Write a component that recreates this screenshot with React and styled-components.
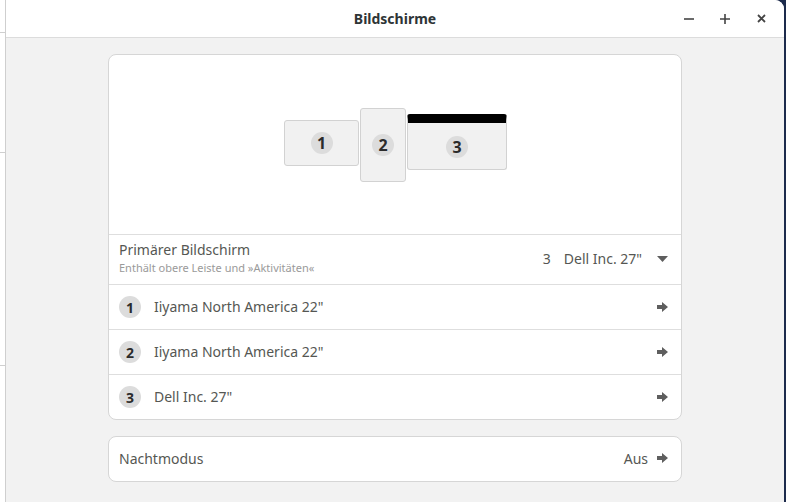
import styled, { createGlobalStyle } from "styled-components";

const Global = createGlobalStyle`
  html, body {
    margin: 0;
    padding: 0;
    height: 100%;
    overflow: hidden;
  }
  body {
    font-family: "Noto Sans", "Open Sans", sans-serif;
    background: #1d2b4c;
  }
  #root {
    height: 100%;
  }
`;

const Screen = styled.div`
  display: flex;
  height: 502px;
  width: 786px;
`;

const LeftStrip = styled.div`
  width: 5px;
  background: #fff;
  border-right: 1px solid #cfcfcf;
  display: flex;
  flex-direction: column;
  .mark {
    height: 1px;
    background: #cfcfcf;
  }
`;

const Window = styled.div`
  width: 778px;
  display: flex;
  flex-direction: column;
  background: #f2f2f2;
  border-top-right-radius: 9px;
  overflow: hidden;
`;

const HeaderBar = styled.div`
  height: 37px;
  flex-shrink: 0;
  background: #fff;
  border-bottom: 1px solid #dcdcdc;
  display: flex;
  align-items: center;
  justify-content: center;
  position: relative;
`;

const Title = styled.div`
  font-size: 14px;
  font-weight: 700;
  color: #2e3436;
`;

const Controls = styled.div`
  position: absolute;
  right: 15px;
  top: 0;
  height: 37px;
  display: flex;
  align-items: center;
  gap: 20px;
`;

const CtrlBtn = styled.div`
  width: 16px;
  height: 16px;
  display: flex;
  align-items: center;
  justify-content: center;
`;

const Content = styled.div`
  padding-top: 16px;
  display: flex;
  flex-direction: column;
  align-items: center;
  gap: 16px;
`;

const Card = styled.div`
  width: 572px;
  background: #fff;
  border: 1px solid #d6d6d6;
  border-radius: 8px;
  display: flex;
  flex-direction: column;
`;

const Arrangement = styled.div`
  height: 179px;
  display: flex;
  align-items: center;
  justify-content: center;
  border-bottom: 1px solid #dedede;
`;

const Canvas = styled.div`
  position: relative;
  width: 223px;
  height: 74px;
  margin-left: 1px;
`;

const Monitor = styled.div`
  position: absolute;
  box-sizing: border-box;
  background: #f1f1f1;
  border: 1px solid #d2d2d2;
  border-radius: 3px;
  display: flex;
  align-items: center;
  justify-content: center;
  overflow: hidden;
  ${(p) => p.$primary && `border-top: 9px solid #000;`}
`;

const Badge = styled.div`
  width: ${(p) => p.$size || 22}px;
  height: ${(p) => p.$size || 22}px;
  border-radius: 50%;
  background: #dcdcdc;
  color: #2b2b2b;
  font-weight: 700;
  font-size: ${(p) => p.$font || 14}px;
  display: flex;
  align-items: center;
  justify-content: center;
  flex-shrink: 0;
`;

const Row = styled.div`
  height: ${(p) => p.$h || 44}px;
  display: flex;
  align-items: center;
  padding: 0 13px 0 10px;
  gap: 13px;
  color: #555753;
  font-size: 14px;
  & + & {
    border-top: 1px solid #dedede;
  }
`;

const TextCol = styled.div`
  flex: 1;
  display: flex;
  flex-direction: column;
  gap: 1px;
  margin-top: -2px;
`;

const Label = styled.div`
  font-size: 14px;
  color: #555753;
  flex: ${(p) => (p.$grow ? 1 : "none")};
  margin-top: -2px;
`;

const Sub = styled.div`
  font-size: 11px;
  color: #9a9a9a;
`;

const Value = styled.div`
  display: flex;
  align-items: center;
  gap: 13px;
  font-size: 14px;
  color: #555753;
  margin-top: -2px;
`;

const Arrow = () => (
  <svg width="11" height="10" viewBox="0 0 11 10">
    <path d="M0 3h5V0l6 5-6 5V7H0z" fill="#5e5e5e" />
  </svg>
);

const Caret = () => (
  <svg width="11" height="6" viewBox="0 0 11 6" style={{ marginLeft: 2 }}>
    <path d="M0 0h11L5.5 6z" fill="#5e5e5e" />
  </svg>
);

const monitors = [
  { n: 1, left: 0, top: 12, w: 75, h: 46 },
  { n: 2, left: 76, top: 0, w: 46, h: 74 },
  { n: 3, left: 123, top: 6, w: 100, h: 56, primary: true },
];

const rows = [
  { n: 1, name: 'Iiyama North America 22"' },
  { n: 2, name: 'Iiyama North America 22"' },
  { n: 3, name: 'Dell Inc. 27"' },
];

export default function App() {
  return (
    <>
      <Global />
      <Screen>
        <LeftStrip>
          <div style={{ height: 32 }} />
          <div className="mark" />
          <div style={{ height: 119 }} />
          <div className="mark" />
          <div style={{ height: 212 }} />
          <div className="mark" />
          <div style={{ flex: 1 }} />
        </LeftStrip>
        <Window>
          <HeaderBar>
            <Title>Bildschirme</Title>
            <Controls>
              <CtrlBtn>
                <svg width="10" height="10" viewBox="0 0 10 10">
                  <path d="M0 5h10" stroke="#444" strokeWidth="1.6" />
                </svg>
              </CtrlBtn>
              <CtrlBtn>
                <svg width="10" height="10" viewBox="0 0 10 10">
                  <path d="M0 5h10M5 0v10" stroke="#444" strokeWidth="1.6" />
                </svg>
              </CtrlBtn>
              <CtrlBtn>
                <svg width="9" height="9" viewBox="0 0 9 9">
                  <path d="M1 1l7 7M8 1L1 8" stroke="#444" strokeWidth="1.8" />
                </svg>
              </CtrlBtn>
            </Controls>
          </HeaderBar>
          <Content>
            <Card>
              <Arrangement>
                <Canvas>
                  {monitors.map((m) => (
                    <Monitor
                      key={m.n}
                      $primary={m.primary}
                      style={{ left: m.left, top: m.top, width: m.w, height: m.h }}
                    >
                      <Badge $size={22} $font={16} style={m.primary ? { marginTop: 2 } : undefined}>
                        {m.n}
                      </Badge>
                    </Monitor>
                  ))}
                </Canvas>
              </Arrangement>
              <Row $h={49}>
                <TextCol>
                  <Label>Primärer Bildschirm</Label>
                  <Sub>Enthält obere Leiste und »Aktivitäten«</Sub>
                </TextCol>
                <Value>
                  <span>3</span>
                  <span>Dell Inc. 27"</span>
                  <Caret />
                </Value>
              </Row>
              {rows.map((r) => (
                <Row key={r.n}>
                  <Badge>{r.n}</Badge>
                  <Label $grow>{r.name}</Label>
                  <Arrow />
                </Row>
              ))}
            </Card>
            <Card>
              <Row $h={44}>
                <Label $grow>Nachtmodus</Label>
                <Value style={{ gap: 9 }}>
                  <span>Aus</span>
                  <Arrow />
                </Value>
              </Row>
            </Card>
          </Content>
        </Window>
      </Screen>
    </>
  );
}
